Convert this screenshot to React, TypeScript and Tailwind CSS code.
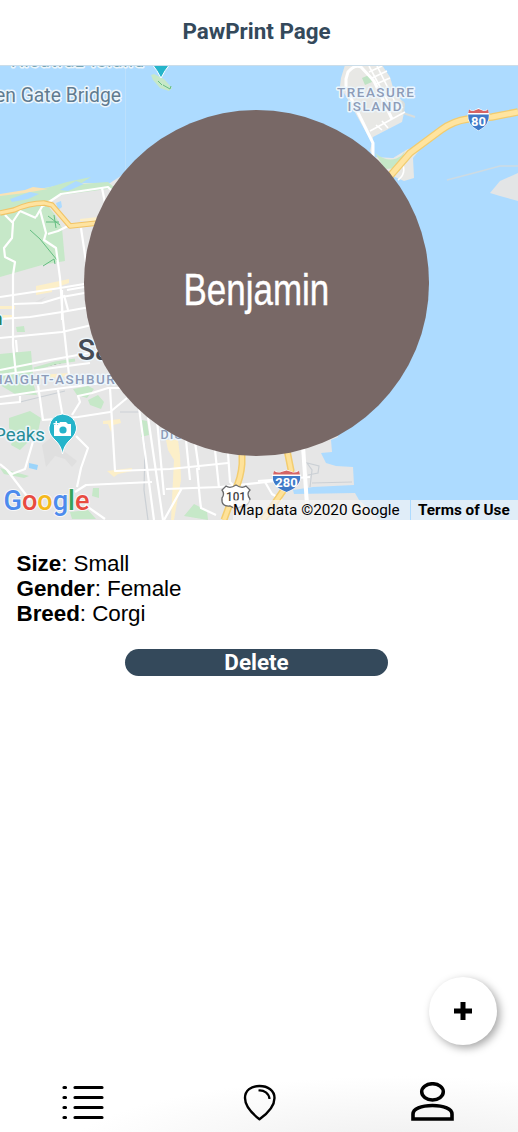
import React from "react";

const minorRoads = [
  "M5 215 L13 223 L12 238 L4 248 L5 257 L15 262 L13 275 L13 345 L16 375",
  "M40 210 L46 233 L44 240 L56 248 L60 278 L63 320 L69 375",
  "M48 234 L58 231 L68 226",
  "M36 218 L20 211 L12 223 M36 217 L43 205",
  "M43 206 L61 194 L108 187 L115 194 M102 188 L106 208",
  "M81 228 L86 262",
  "M0 297 L60 288 L90 283 M62 290 L62 320 M67 290 L90 286",
  "M14 304 L42 303 L62 297 L90 292 M64 295 L68 310",
  "M0 319 L30 317 L62 312 L90 307",
  "M0 338 L62 332 L92 325",
  "M0 370 L50 360 L100 351 M0 375 L90 363",
  "M0 397 L40 391 L110 382 M0 404 L20 402 L20 396",
  "M16 340 L17 352 M38 385 L43 420 L78 417 L110 412 L127 398",
  "M58 390 L63 418 M72 415 L80 402 L78 396 L92 393 L108 388 L120 388",
  "M110 388 L115 471 L170 469 L228 463",
  "M76 436 L88 448 L81 468 L77 487",
  "M75 492 L86 485 L152 482",
  "M34 438 L25 469 L12 474 L0 464 M7 470 L30 500 M85 505 L105 519",
  "M138 400 L154 520 M147 410 L163 520 M157 420 L164 495",
  "M185 430 L190 480 M195 442 L199 470",
  "M197 468 L200 500 L201 508 L216 515 M215 450 L219 488 M228 453 L230 482 L238 490",
  "M166 489 L220 487 L275 481 M182 488 L164 520",
  "M258 481 L310 477 M265 482 L272 494 L282 500",
];

function RoadShield({ x, y, width, label }: { x: number; y: number; width: number; label: string }) {
  return (
    <g transform={`translate(${x} ${y})`}>
      <svg x={-width / 2} y="-12" width={width} height="24" viewBox="0 0 28 24" preserveAspectRatio="none">
        <path d="M3 1 Q6 4 9 2 L14 0 L19 2 Q22 4 25 1 L28 6 Q29 17 14 23 Q-1 17 0 6Z" fill="#fff" />
        <path d="M2 1.500 Q6 4 9 2.500 L14 1 L19 2.500 Q22 4 26 1.500 L27 5 H1Z" fill="#d56465" />
        <path d="M.8 6.500 H27.200 Q28 17 14 22.500 Q0 17 .8 6.500Z" fill="#3e79c8" />
      </svg>
      <text y="5.500" textAnchor="middle" fontSize="13" fontWeight="700" fill="#fff">{label}</text>
    </g>
  );
}

function MapDrawing() {
  return (
    <svg className="block h-full w-full" viewBox="0 66 518 454" preserveAspectRatio="none" fontFamily="Roboto, sans-serif">
      <rect y="65" width="518" height="455" fill="#addbff" />
      <path d="M0 196 L50 187 L75 183 L110 183 L130 170 L240 170 L330 300 L338 437 L331 440 L332 452 L321 453 L326 463 L336 466 L353 467 L354 485 L313 487 L293 490 L294 494 L355 493 L359 500 L372 511 L378 520 H0Z" fill="#e6e6e6" />
      <path d="M0 195 L20 193 L50 187 L67 182 L91 177 L80 184 L108 182 L115 188 L62 195 L45 202 L55 215 L62 228 L65 261 L42 265 L0 277Z" fill="#c6e8c8" />
      <path d="M0 194 L25 190 L33 187 L48 189 L25 193 L0 196Z" fill="#fae2b4" />
      <path d="M10 199 L30 192 L39 194 L28 199 L12 202Z M56 203 L61 201 L62 207 L58 210Z M60 190 L76 181 L84 184 L68 191Z" fill="#addbff" />
      <path d="M30 230 L40 239 L57 260 M48 216 L60 225 M46 222 L59 222 M54 215 L56 228 M43 266 L54 259 L55 264" fill="none" stroke="#65bd82" strokeWidth="1" />
      <g fill="#fcefc9">
        <path d="M36 286 L69 279 V283 L52 289 V292 L36 295Z M0 306 H15 V309 H0Z M80 219 L98 217 V221 H80Z M0 315 H12 V319 H0Z" />
        <path d="M103 421 L120 419 L121 423 L113 425 L111 432 L108 424 H103Z M107 471 L132 468 V471 L118 474 L114 477Z M166 440 L178 440 L180 455 L181 480 L174 520 H171 L174 460 L168 450Z M38 375 L70 373 V376 L40 379Z" />
      </g>
      <g fill="#c6e8c8">
        <path d="M0 354 L31 351 L34 386 L37 395 L15 394 L0 385Z M9 418 L30 411 L41 418 L38 432 L20 450 L11 445 L14 435 L9 428Z" />
        <path d="M73 389 L88 386 L94 389 L87 398 L77 395Z M88 400 L98 395 L104 402 L101 409 L90 405Z M142 420 L147 421 L149 435 L141 437Z M93 488 H99 V498 L92 496Z M70 512 L88 510 L96 519 H72Z M184 516 L194 504 L200 507 L207 511 L208 520Z M16 327 L24 326 L25 332 H17Z M0 468 L29 476 L24 478 L4 474Z" />
      </g>
      <path d="M29 463 L38 465 L37 470 L29 468Z" fill="#9bd4fa" />
      <path d="M42 445 L53 436 L65 452 L77 461 L72 467 L65 459 L55 456 L46 467Z M57 507 L64 496 L72 501 L63 510Z M35 302 L47 296 L41 301Z" fill="#dfdfdf" />
      <path d="M120 412 H140 L145 448 L144 490 L148 520 M20 402 L65 391 M310 487 L312 470 L307 463 L319 466 L318 473 L308 475 M312 483 L352 482" fill="none" stroke="#cbd0d5" strokeWidth="1.200" />
      <path d="M34 369 L55 363 L75 360" stroke="#c6e8c8" strokeWidth="3" />
      <g fill="none" stroke="#fff" strokeWidth="2.200" strokeLinejoin="round">
        {minorRoads.map((road) => <path key={road} d={road} />)}
      </g>
      <path d="M303 446 L307 505" stroke="#fff" strokeWidth="4" />
      <path d="M0 213 L14 210 Q29 203 44 203 L52 205 L70 226 L98 223" fill="none" stroke="#f2c466" strokeWidth="5.500" strokeLinejoin="round" />
      <path d="M0 213 L14 210 Q29 203 44 203 L52 205 L70 226 L98 223" fill="none" stroke="#fee3a0" strokeWidth="3.300" strokeLinejoin="round" />
      <path d="M242 454 V464 Q241 478 235 490 L224 520 M287 450 L291 470 L283 491 L263 520" fill="none" stroke="#f3cd70" strokeWidth="7" />
      <path d="M242 454 V464 Q241 478 235 490 L224 520 M287 450 L291 470 L283 491 L263 520" fill="none" stroke="#fee29a" strokeWidth="4" />

      <path d="M345 65 L341 78 L340 86 L347 98 L372 143 L374 157 L393 158 L408 149 L421 148 L413 158 L414 178 L404 181 L388 174 L370 151 L373 137 L402 122 L404 113 L402 101 L394 91 L390 77 L382 65Z" fill="#e8e8e5" />
      <path d="M374 144 L377 154 L393 158 L405 148 L396 145 L402 124 L375 137Z" fill="#addbff" />
      <path d="M375 153 Q390 165 402 155 L405 151 L398 168 L385 169Z" fill="#c6e8c8" />
      <path d="M362 78 L369 75 L372 82 L365 85Z" fill="#bfe3c4" />
      <path d="M402 101 L404 104 L403 113 L415 117" fill="none" stroke="#d8dddc" strokeWidth="2" />
      <path d="M373 157 L373 143 L346 88 L346 79 L348 72 Q355 64 361 67 L374 81 L392 119" fill="none" stroke="#fff" strokeWidth="3" />
      <path d="M369 66 L393 111 M377 66 L399 110 M369 72 L382 66 M372 78 L387 71 M376 84 L390 78 M370 131 L405 112 M376 125 L382 130 M382 121 L388 128 M395 111 L403 107 M398 180 Q406 174 403 165" fill="none" stroke="#fff" strokeWidth="1.600" />
      <path d="M390 176 L410 153 L441 130 Q453 121 468 119 L492 117 L518 112" fill="none" stroke="#f1cc70" strokeWidth="7.500" />
      <path d="M390 176 L410 153 L441 130 Q453 121 468 119 L492 117 L518 112" fill="none" stroke="#ffe49f" strokeWidth="5" />
      <path d="M447 180 L474 173 L500 166 L518 166" fill="none" stroke="#cddbe3" strokeWidth="1.500" />
      <path d="M490 193 L500 181 L518 173 V201 L500 196Z" fill="#e3e5e6" />
      <path d="M151 75 L154 74 L164 79 L172 88 L169 91 L160 88 L153 80Z" fill="#c6e8c8" />
      <path d="M158 81 L162 85 M163 85 L170 89 L171 86" fill="none" stroke="#65bd82" strokeWidth="1" />
      <path d="M152 64 Q157 70 161 78 Q165 70 170 64Z" fill="#25b4ca" stroke="#fff" />
      <path d="M125.500 65 V175" stroke="#bce0fc" />

      <g paintOrder="stroke" stroke="#edf6fc" strokeWidth="3" strokeLinejoin="round">
        <text x="12" y="66.500" fontSize="17" textLength="132" fill="#76a5b5">Alcatraz Island</text>
        <text x="-5" y="102" fontSize="19.500" textLength="126" lengthAdjust="spacingAndGlyphs" fill="#607b90">en Gate Bridge</text>
        <g fontSize="13.500" fontWeight="500" fill="#8d9cb8">
          <text x="337" y="97" textLength="77">TREASURE</text>
          <text x="347.500" y="110.500" textLength="54">ISLAND</text>
          <text x="-7" y="384" textLength="131">HAIGHT-ASHBURY</text>
          <text x="160.500" y="439" fontSize="12.500" textLength="62">DISTRICT</text>
        </g>
        <text x="77.500" y="360" fontSize="29" fontWeight="500" fill="#454c56">San</text>
        <text x="-8" y="325" fontSize="19" fontWeight="500" fill="#278063">n</text>
        <text x="-6" y="441" fontSize="19" textLength="51" lengthAdjust="spacingAndGlyphs" fill="#278d98">Peaks</text>
      </g>
      <path d="M62.500 454 Q61 445 54 439 Q48 433 49 427 Q51 415 62.500 414 Q75 415 76.500 427 Q77 433 71 439 Q64 445 62.500 454Z" fill="#25b4ca" stroke="#fff" />
      <path d="M54 425 H58 L60 422 H66 L68 424 H71 V436 H54Z M55.500 421 H57 V423 H59 V424.500 H57 V426 H55.500 V424.500 H53.500 V423 H55.500Z" fill="#fff" />
      <circle cx="63" cy="430" r="3.600" fill="#25b4ca" />
      <RoadShield x={478.500} y={120} width={22} label="80" />
      <RoadShield x={286.500} y={481.500} width={29} label="280" />
      <path d="M226 486 Q230 489 236 485 Q242 489 246 486 L250 490 Q246 494 250 499 Q249 506 242 506 L236 509 L230 506 Q221 507 222 498 Q225 494 222 490Z" fill="#fff" stroke="#68696b" strokeWidth="1.300" />
      <text x="236" y="501" textAnchor="middle" fontSize="12.500" fontWeight="500" textLength="20" lengthAdjust="spacingAndGlyphs" fill="#444">101</text>
      <text x="3.500" y="510" fontSize="27" fontWeight="500" textLength="86" lengthAdjust="spacingAndGlyphs" paintOrder="stroke" stroke="#fff" strokeOpacity=".7" strokeWidth="2">
        <tspan fill="#4d8bed">G</tspan><tspan fill="#e84b40">o</tspan><tspan fill="#f5b91c">o</tspan><tspan fill="#4d8bed">g</tspan><tspan fill="#37a55a">l</tspan><tspan fill="#e84b40">e</tspan>
      </text>
    </svg>
  );
}

export default function App() {
  return (
    <main className="flex h-[1132px] w-[518px] flex-col overflow-hidden bg-white font-['Liberation_Sans',sans-serif] text-black">
      <header className="flex h-[65px] shrink-0 items-center justify-center pb-px pr-[5px] font-[Roboto,sans-serif] text-[22.4px] font-bold text-[#34495b]">
        <h1>PawPrint Page</h1>
      </header>
      <section className="relative h-[455px] shrink-0 overflow-hidden border-t border-[#cbdde9]">
        <MapDrawing />
        <div className="absolute left-[84px] top-[44px] flex h-[346px] w-[345px] items-center justify-center rounded-full bg-[#786866] text-white">
          <span className="mr-px mt-[13px] scale-x-[0.78] text-[44.800px] leading-none [-webkit-text-stroke:0.4px_white]">Benjamin</span>
        </div>
        <div className="absolute bottom-0 right-0 flex h-[20px] items-center font-[Roboto,sans-serif] text-[15.3px] leading-5">
          <span className="w-[177px] whitespace-nowrap bg-[#f5f5f5]/70">Map data ©2020 Google</span>
          <span className="ml-px w-[107px] whitespace-nowrap bg-[#f5f5f5]/70 pl-[7px] font-bold">Terms of Use</span>
        </div>
      </section>
      <section className="pl-[16.500px] pt-[31px] text-[22.4px] leading-[25px] tracking-[-0.04px]">
        <p><strong>Size</strong>: Small</p>
        <p><strong>Gender</strong>: Female</p>
        <p><strong>Breed</strong>: Corgi</p>
      </section>
      <button className="ml-[125px] mt-[23px] flex h-[27px] w-[263px] items-center justify-center rounded-[14px] bg-[#34495b] font-[Roboto,sans-serif] text-[22.4px] font-bold leading-none text-white">
        Delete
      </button>
      <div className="mt-auto flex justify-end pr-[21px]">
        <button aria-label="Add" className="flex h-[68px] w-[68px] items-center justify-center rounded-full bg-white shadow-[3px_3px_8px_rgba(0,0,0,0.35)]">
          <svg className="h-[18px] w-[18px]" viewBox="0 0 18 18"><path d="M6.500 0h5v6.500H18v5h-6.500V18h-5v-6.500H0v-5h6.500Z" /></svg>
        </button>
      </div>
      <nav className="mt-[17px] flex h-[70px] shrink-0 items-start justify-between bg-[radial-gradient(ellipse_at_78%_135%,#ededed,white_60%)] pl-[62px] pr-[64px] pt-[20px]">
        <svg className="mt-[3px] h-[35px] w-[42px]" viewBox="0 0 42 35">
          <path d="M2 2.500h1.500m9.500 0h27M2 12.500h1.500m9.500 0h27M2 22.500h1.500m9.500 0h27M2 32.500h1.500m9.500 0h27" fill="none" stroke="black" strokeWidth="3.200" strokeLinecap="round" />
        </svg>
        <svg className="mr-[-3px] mt-[2px] h-[37px] w-[33px]" viewBox="0 0 33 37">
          <path d="M16.500 35.300C9 29.500 2 21.500 2 14 2 6.500 8 2 16.500 2S31.500 6.500 31.500 14c0 7.500-7 15.500-15 21.300Z" fill="none" stroke="black" strokeWidth="2.400" strokeLinejoin="round" />
          <path d="M15.500 6.500C21 6 26 9 26.500 15" fill="none" stroke="black" strokeWidth="2.200" />
        </svg>
        <svg className="h-[39px] w-[43px]" viewBox="0 0 43 39">
          <ellipse cx="21.500" cy="9.800" rx="10.800" ry="8.100" fill="none" stroke="black" strokeWidth="3.500" />
          <path d="M2 37V32C2 27 10 23.500 21.500 23.500S41 27 41 32V37Z" fill="none" stroke="black" strokeWidth="3.600" />
        </svg>
      </nav>
    </main>
  );
}
